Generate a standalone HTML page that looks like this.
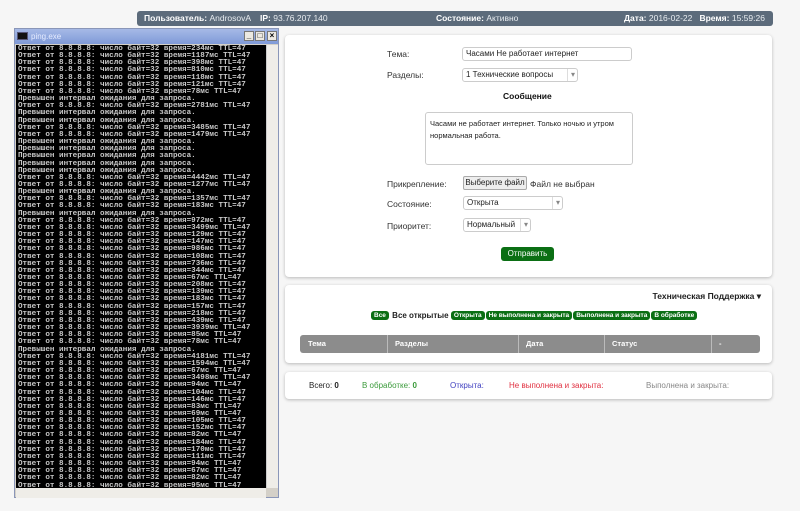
<!DOCTYPE html>
<html><head><meta charset="utf-8"><style>
*{box-sizing:border-box;margin:0;padding:0}
body{width:800px;height:511px;background:#f6f6f6;font-family:"Liberation Sans","Noto Sans CJK SC",sans-serif;position:relative;overflow:hidden;font-size:8px;color:#222}
.top{position:absolute;left:137px;top:11px;width:636px;height:15px;background:#5c6b7b;border-radius:3px;color:#e8ecf0;font-size:8.5px;line-height:15px}
.top b{color:#fff}
.top span{position:absolute;top:0}
.win{position:absolute;left:14px;top:28px;width:265px;height:470px;background:#d4d0c8;border:1px solid #8a96b8}
.title{height:15px;background:linear-gradient(#a6b9e6,#7f9ad8);color:#e6ecff;font-size:8px;line-height:15px;padding-left:16px;position:relative}
.title i{position:absolute;left:2px;top:3px;width:11px;height:8px;background:#111;border:1px solid #557}
.btn{position:absolute;top:2px;width:10px;height:10px;background:#ece9e2;border:1px solid #777;font-size:8px;line-height:8px;text-align:center;color:#000;font-weight:bold}
.con{position:absolute;left:1px;top:16px;width:250px;height:443px;background:#000;color:#c8c8c8;font-family:"Liberation Mono",monospace;font-size:7.6px;line-height:7.15px;white-space:pre;overflow:hidden;padding:1px 0 0 2px;font-weight:bold}
.vs{position:absolute;left:251px;top:16px;width:12px;height:443px;background:#efede8;border-left:1px solid #ccc}
.hs{position:absolute;left:1px;top:459px;width:250px;height:10px;background:#efede8}
.panel{position:absolute;left:285px;background:#fff;border-radius:4px;box-shadow:0 1px 3px rgba(0,0,0,.25);width:487px}
.lbl{position:absolute;font-size:8.5px;color:#333}
.inp{position:absolute;border:1px solid #ccc;border-radius:3px;background:#fff;font-size:8px;padding-left:3px;color:#222}
.sel:after{content:"▾";position:absolute;right:2px;top:0;color:#888;border-left:1px solid #ddd;padding-left:3px}
.tag{display:inline-block;background:#0b6f14;color:#fff;border-radius:3px;font-size:6.5px;padding:1px 3px;margin-right:1px;vertical-align:middle}
</style></head><body>
<div class="top">
<span style="left:7px"><b>Пользователь:</b> AndrosovA &nbsp;&nbsp;&nbsp;<b>IP:</b> 93.76.207.140</span>
<span style="left:299px"><b>Состояние:</b> Активно</span>
<span style="left:487px"><b>Дата:</b> 2016-02-22 &nbsp;&nbsp;<b>Время:</b> 15:59:26</span>
</div>
<div class="win">
<div class="title"><i></i>ping.exe
<div class="btn" style="left:229px">_</div><div class="btn" style="left:240px">□</div><div class="btn" style="left:252px">×</div></div>
<div class="con">Ответ от 8.8.8.8: число байт=32 время=234мс TTL=47
Ответ от 8.8.8.8: число байт=32 время=1187мс TTL=47
Ответ от 8.8.8.8: число байт=32 время=398мс TTL=47
Ответ от 8.8.8.8: число байт=32 время=810мс TTL=47
Ответ от 8.8.8.8: число байт=32 время=118мс TTL=47
Ответ от 8.8.8.8: число байт=32 время=121мс TTL=47
Ответ от 8.8.8.8: число байт=32 время=78мс TTL=47
Превышен интервал ожидания для запроса.
Ответ от 8.8.8.8: число байт=32 время=2781мс TTL=47
Превышен интервал ожидания для запроса.
Превышен интервал ожидания для запроса.
Ответ от 8.8.8.8: число байт=32 время=3485мс TTL=47
Ответ от 8.8.8.8: число байт=32 время=1479мс TTL=47
Превышен интервал ожидания для запроса.
Превышен интервал ожидания для запроса.
Превышен интервал ожидания для запроса.
Превышен интервал ожидания для запроса.
Превышен интервал ожидания для запроса.
Ответ от 8.8.8.8: число байт=32 время=4442мс TTL=47
Ответ от 8.8.8.8: число байт=32 время=1277мс TTL=47
Превышен интервал ожидания для запроса.
Ответ от 8.8.8.8: число байт=32 время=1357мс TTL=47
Ответ от 8.8.8.8: число байт=32 время=183мс TTL=47
Превышен интервал ожидания для запроса.
Ответ от 8.8.8.8: число байт=32 время=972мс TTL=47
Ответ от 8.8.8.8: число байт=32 время=3499мс TTL=47
Ответ от 8.8.8.8: число байт=32 время=129мс TTL=47
Ответ от 8.8.8.8: число байт=32 время=147мс TTL=47
Ответ от 8.8.8.8: число байт=32 время=986мс TTL=47
Ответ от 8.8.8.8: число байт=32 время=108мс TTL=47
Ответ от 8.8.8.8: число байт=32 время=736мс TTL=47
Ответ от 8.8.8.8: число байт=32 время=344мс TTL=47
Ответ от 8.8.8.8: число байт=32 время=67мс TTL=47
Ответ от 8.8.8.8: число байт=32 время=208мс TTL=47
Ответ от 8.8.8.8: число байт=32 время=139мс TTL=47
Ответ от 8.8.8.8: число байт=32 время=183мс TTL=47
Ответ от 8.8.8.8: число байт=32 время=157мс TTL=47
Ответ от 8.8.8.8: число байт=32 время=218мс TTL=47
Ответ от 8.8.8.8: число байт=32 время=439мс TTL=47
Ответ от 8.8.8.8: число байт=32 время=3939мс TTL=47
Ответ от 8.8.8.8: число байт=32 время=85мс TTL=47
Ответ от 8.8.8.8: число байт=32 время=78мс TTL=47
Превышен интервал ожидания для запроса.
Ответ от 8.8.8.8: число байт=32 время=4181мс TTL=47
Ответ от 8.8.8.8: число байт=32 время=1594мс TTL=47
Ответ от 8.8.8.8: число байт=32 время=67мс TTL=47
Ответ от 8.8.8.8: число байт=32 время=3498мс TTL=47
Ответ от 8.8.8.8: число байт=32 время=94мс TTL=47
Ответ от 8.8.8.8: число байт=32 время=104мс TTL=47
Ответ от 8.8.8.8: число байт=32 время=146мс TTL=47
Ответ от 8.8.8.8: число байт=32 время=83мс TTL=47
Ответ от 8.8.8.8: число байт=32 время=69мс TTL=47
Ответ от 8.8.8.8: число байт=32 время=105мс TTL=47
Ответ от 8.8.8.8: число байт=32 время=152мс TTL=47
Ответ от 8.8.8.8: число байт=32 время=82мс TTL=47
Ответ от 8.8.8.8: число байт=32 время=184мс TTL=47
Ответ от 8.8.8.8: число байт=32 время=170мс TTL=47
Ответ от 8.8.8.8: число байт=32 время=111мс TTL=47
Ответ от 8.8.8.8: число байт=32 время=94мс TTL=47
Ответ от 8.8.8.8: число байт=32 время=67мс TTL=47
Ответ от 8.8.8.8: число байт=32 время=82мс TTL=47
Ответ от 8.8.8.8: число байт=32 время=95мс TTL=47</div>
<div class="vs"></div><div class="hs"></div>
</div>

<div class="panel" style="top:35px;height:242px">
<div class="lbl" style="left:102px;top:14px">Тема:</div>
<div class="inp" style="left:177px;top:12px;width:170px;height:14px;line-height:12px">Часами Не работает интернет</div>
<div class="lbl" style="left:102px;top:35px">Разделы:</div>
<div class="inp sel" style="left:177px;top:33px;width:116px;height:14px;line-height:12px">1 Технические вопросы</div>
<div class="lbl" style="left:218px;top:56px;font-weight:bold;color:#111">Сообщение</div>
<div class="inp" style="left:140px;top:77px;width:208px;height:53px;padding:5px 4px;line-height:12px;font-size:7.5px">Часами не работает интернет. Только ночью и утром нормальная работа.</div>
<div class="lbl" style="left:102px;top:144px">Прикрепление:</div>
<div style="position:absolute;left:178px;top:141px;width:64px;height:14px;background:#eee;border:1px solid #aaa;border-radius:2px;font-size:8px;text-align:center;line-height:12px">Выберите файл</div>
<div class="lbl" style="left:245px;top:144px">Файл не выбран</div>
<div class="lbl" style="left:102px;top:164px">Состояние:</div>
<div class="inp sel" style="left:178px;top:161px;width:100px;height:14px;line-height:12px">Открыта</div>
<div class="lbl" style="left:102px;top:186px">Приоритет:</div>
<div class="inp sel" style="left:178px;top:183px;width:68px;height:14px;line-height:12px">Нормальный</div>
<div style="position:absolute;left:216px;top:212px;width:53px;height:14px;background:#0b6f14;color:#fff;border-radius:3px;text-align:center;font-size:8px;line-height:14px">Отправить</div>
</div>

<div class="panel" style="top:285px;height:78px">
<div class="lbl" style="right:11px;top:6px;font-weight:bold;color:#222">Техническая Поддержка ▾</div>
<div style="position:absolute;left:86px;top:26px;font-size:8px;font-weight:bold;white-space:nowrap"><span class="tag">Все</span> Все открытые <span class="tag">Открыта</span><span class="tag">Не выполнена и закрыта</span><span class="tag">Выполнена и закрыта</span><span class="tag">В обработке</span></div>
<div style="position:absolute;left:15px;top:50px;width:460px;height:18px;background:#8c8c8c;border-radius:3px;color:#fff;font-size:7.5px;font-weight:bold;line-height:18px">
<span style="position:absolute;left:8px">Тема</span>
<span style="position:absolute;left:87px;top:0;height:18px;border-left:1px solid #bbb;padding-left:7px">Разделы</span>
<span style="position:absolute;left:218px;top:0;height:18px;border-left:1px solid #bbb;padding-left:7px">Дата</span>
<span style="position:absolute;left:304px;top:0;height:18px;border-left:1px solid #bbb;padding-left:7px">Статус</span>
<span style="position:absolute;left:411px;top:0;height:18px;border-left:1px solid #bbb;padding-left:7px">-</span>
</div>
</div>

<div class="panel" style="top:372px;height:27px;font-size:8px;line-height:27px">
<span style="position:absolute;left:24px">Всего: <b>0</b></span>
<span style="position:absolute;left:77px;color:#3a9a3a">В обработке: <b>0</b></span>
<span style="position:absolute;left:165px;color:#4040c0">Открыта:</span>
<span style="position:absolute;left:224px;color:#e03040">Не выполнена и закрыта:</span>
<span style="position:absolute;left:361px;color:#888">Выполнена и закрыта:</span>
</div>
</body></html>
